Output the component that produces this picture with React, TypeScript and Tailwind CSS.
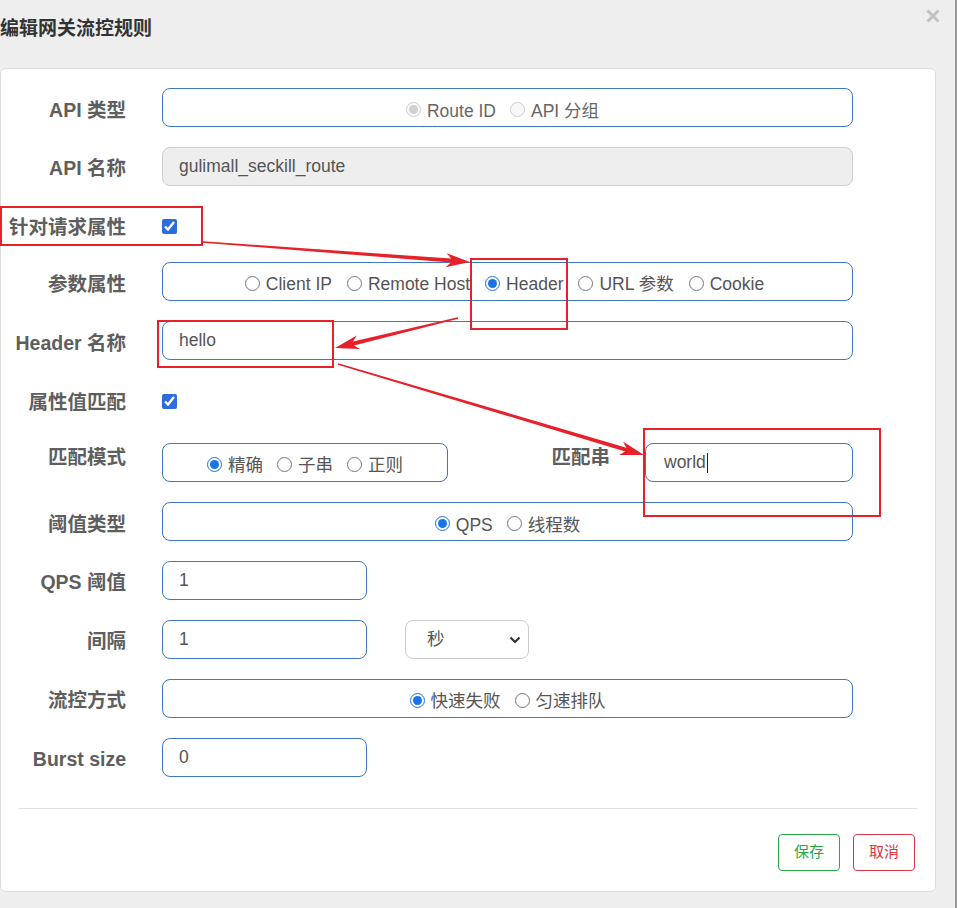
import React from "react";

const RED = "#e8202a";

function arrowPoly(x1: number, y1: number, x2: number, y2: number) {
  const dx = x2 - x1;
  const dy = y2 - y1;
  const len = Math.sqrt(dx * dx + dy * dy);
  const ux = dx / len;
  const uy = dy / len;
  const nx = -uy;
  const ny = ux;
  const hl = 24;
  const hw = 7;
  const bx = x2 - ux * hl;
  const by = y2 - uy * hl;
  const nbx = x2 - ux * (hl - 5);
  const nby = y2 - uy * (hl - 5);
  const pts: [number, number][] = [
    [x1 + nx * 0.7, y1 + ny * 0.7],
    [nbx + nx * 2, nby + ny * 2],
    [bx + nx * hw, by + ny * hw],
    [x2, y2],
    [bx - nx * hw, by - ny * hw],
    [nbx - nx * 2, nby - ny * 2],
    [x1 - nx * 0.7, y1 - ny * 0.7],
  ];
  return pts.map((p) => `${p[0].toFixed(1)},${p[1].toFixed(1)}`).join(" ");
}

function Radio({ label, checked, disabled }: { label: string; checked?: boolean; disabled?: boolean }) {
  return (
    <label className="flex items-center gap-[6px]">
      <input
        type="radio"
        readOnly
        checked={!!checked}
        disabled={disabled}
        className="m-0 mt-[-3px] h-[15px] w-[15px] accent-[#1a73e8]"
      />
      <span className={disabled ? "text-[#666]" : "text-[#555]"}>{label}</span>
    </label>
  );
}

function Label({ children, className = "" }: { children: React.ReactNode; className?: string }) {
  return (
    <div className={"flex w-[125px] shrink-0 justify-end whitespace-nowrap text-[19.5px] font-bold text-[#5e5e5e] " + className}>
      {children}
    </div>
  );
}

function Box({ children, className = "" }: { children?: React.ReactNode; className?: string }) {
  return (
    <div
      className={
        "flex h-[39px] items-center rounded-[8px] border border-[#3d79bd] bg-white text-[17.5px] text-[#555] " + className
      }
    >
      {children}
    </div>
  );
}

export default function App() {
  return (
    <div className="flex h-[908px] w-[957px] overflow-hidden bg-[#eeeeee] font-['Liberation_Sans','Noto_Sans_CJK_SC',sans-serif]">
      <div className="relative w-[955px]">
        {/* header */}
        <div className="flex h-[68px] items-start justify-between">
          <div className="mt-[15px] text-[19px] font-bold text-[#333]">编辑网关流控规则</div>
          <svg width="14" height="14" viewBox="0 0 14 14" className="mr-[15px] mt-[9px]">
            <path d="M1.5 1.5 L12.5 12.5 M12.5 1.5 L1.5 12.5" stroke="#c2c2c2" strokeWidth="3" />
          </svg>
        </div>

        {/* card */}
        <div className="w-[936px] rounded-[6px] border border-[#dcdcdc] bg-white pt-[19px]">
          <div className="flex flex-col gap-[20px]">
            <div className="flex items-center">
              <Label className="pt-[6px]">API 类型</Label>
              <Box className="ml-[36px] w-[691px] justify-center gap-[14px] pt-[7px] pr-[10px]">
                <Radio label="Route ID" checked disabled />
                <Radio label="API 分组" disabled />
              </Box>
            </div>

            <div className="flex items-center">
              <Label className="pt-[4px]">API 名称</Label>
              <div className="ml-[36px] flex h-[39px] w-[691px] items-center rounded-[8px] border border-[#cfcfcf] bg-[#eeeeee] pl-[16px] text-[17.5px] text-[#555]">
                gulimall_seckill_route
              </div>
            </div>

            <div className="flex h-[36px] items-center">
              <Label className="pt-[8px]">针对请求属性</Label>
              <input
                type="checkbox"
                readOnly
                checked
                className="m-0 ml-[36px] mt-[5px] h-[15px] w-[15px] accent-[#2d6cdf]"
              />
            </div>

            <div className="flex items-center">
              <Label className="pt-[6px]">参数属性</Label>
              <Box className="ml-[36px] w-[691px] justify-center gap-[15px] pt-[6px] pr-[6px]">
                <Radio label="Client IP" />
                <Radio label="Remote Host" />
                <Radio label="Header" checked />
                <Radio label="URL 参数" />
                <Radio label="Cookie" />
              </Box>
            </div>

            <div className="flex items-center">
              <Label className="pt-[6px]">Header 名称</Label>
              <Box className="ml-[36px] w-[691px] pl-[16px]">hello</Box>
            </div>

            <div className="flex h-[43px] items-center">
              <Label className="pt-[2px]">属性值匹配</Label>
              <input
                type="checkbox"
                readOnly
                checked
                className="m-0 ml-[36px] h-[15px] w-[15px] accent-[#2d6cdf]"
              />
            </div>

            <div className="flex items-start">
              <Label className="leading-[28px]">匹配模式</Label>
              <Box className="ml-[36px] w-[286px] justify-center gap-[14px] pt-[6px]">
                <Radio label="精确" checked />
                <Radio label="子串" />
                <Radio label="正则" />
              </Box>
              <div className="flex w-[162px] justify-end text-[19.5px] font-bold leading-[28px] text-[#5e5e5e]">匹配串</div>
              <Box className="ml-[35px] w-[208px] pl-[18px]">
                <span>world</span>
                <span className="ml-[1px] h-[20px] w-[1.5px] bg-[#222]" />
              </Box>
            </div>

            <div className="flex items-center">
              <Label className="pt-[6px]">阈值类型</Label>
              <Box className="ml-[36px] w-[691px] justify-center gap-[14px] pt-[7px]">
                <Radio label="QPS" checked />
                <Radio label="线程数" />
              </Box>
            </div>

            <div className="flex items-center">
              <Label className="pt-[4px]">QPS 阈值</Label>
              <Box className="ml-[36px] w-[205px] pl-[16px]">1</Box>
            </div>

            <div className="flex items-center">
              <Label className="pt-[5px]">间隔</Label>
              <Box className="ml-[36px] w-[205px] pl-[16px]">1</Box>
              <div className="ml-[38px] flex h-[39px] w-[124px] items-center justify-between rounded-[8px] border border-[#cccccc] bg-white pl-[21px] pr-[7px] text-[17.5px] text-[#555]">
                <span>秒</span>
                <svg width="12" height="8" viewBox="0 0 12 8">
                  <path d="M1.5 1.5 L6 6 L10.5 1.5" stroke="#333" strokeWidth="2.2" fill="none" />
                </svg>
              </div>
            </div>

            <div className="flex items-center">
              <Label className="pt-[4px]">流控方式</Label>
              <Box className="ml-[36px] w-[691px] justify-center gap-[14px] pt-[6px]">
                <Radio label="快速失败" checked />
                <Radio label="匀速排队" />
              </Box>
            </div>

            <div className="flex items-center">
              <Label className="pt-[4px]">Burst size</Label>
              <Box className="ml-[36px] w-[205px] pl-[16px]">0</Box>
            </div>
          </div>

          <div className="mx-[18px] mt-[31px] h-px bg-[#e0e0e0]" />

          <div className="flex justify-end gap-[13px] pb-[20px] pr-[20px] pt-[25px]">
            <div className="flex h-[37px] w-[62px] items-center justify-center rounded-[4px] border border-[#28a745] text-[15px] text-[#28a745]">
              保存
            </div>
            <div className="flex h-[37px] w-[62px] items-center justify-center rounded-[4px] border border-[#dc3545] text-[15px] text-[#dc3545]">
              取消
            </div>
          </div>
        </div>

        {/* annotations */}
        <div className="absolute left-0 top-[206px] h-[40px] w-[203px] border-2 border-[#e8202a]" />
        <div className="absolute left-[470px] top-[258px] h-[72px] w-[98px] border-2 border-[#e8202a]" />
        <div className="absolute left-[157px] top-[320px] h-[48px] w-[177px] border-2 border-[#e8202a]" />
        <div className="absolute left-[643px] top-[428px] h-[89px] w-[238px] border-2 border-[#e8202a]" />
        <svg className="pointer-events-none absolute left-0 top-0" width="957" height="908">
          <polygon points={arrowPoly(203, 242, 470, 262)} fill={RED} />
          <polygon points={arrowPoly(458, 318, 335, 348)} fill={RED} />
          <polygon points={arrowPoly(338, 364, 644, 455)} fill={RED} />
        </svg>
      </div>
      <div className="h-full w-[2px] bg-[#9a9a9a]" />
    </div>
  );
}
